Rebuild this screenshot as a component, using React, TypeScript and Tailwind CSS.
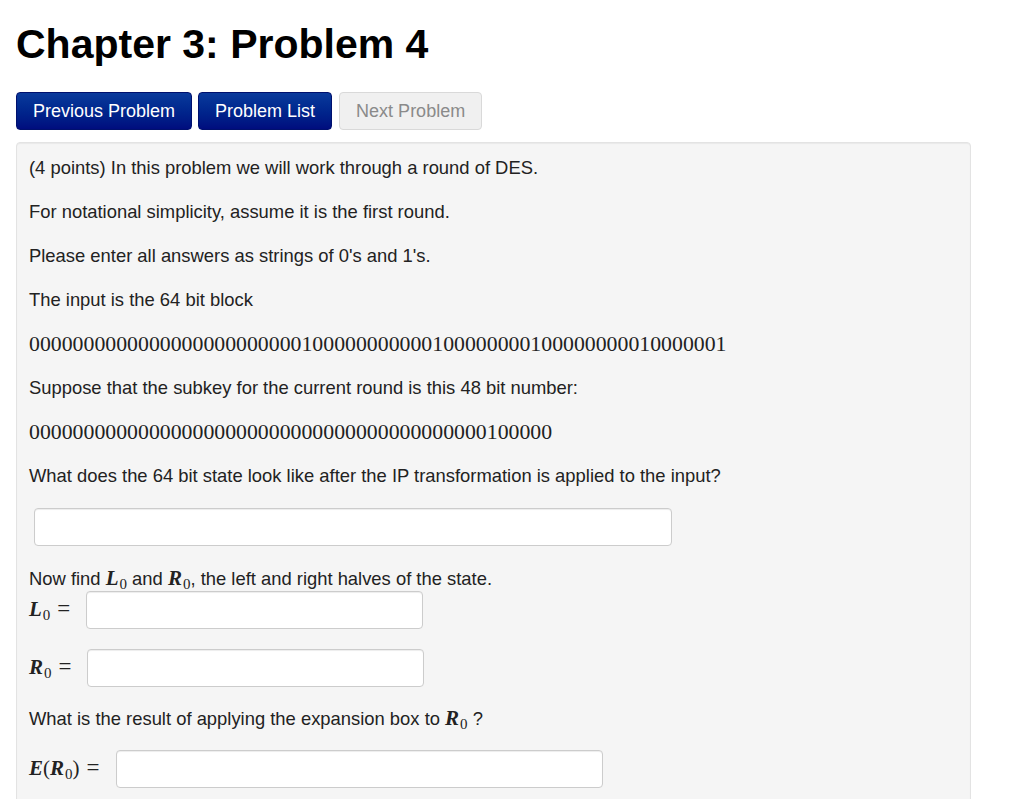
import type { ReactNode } from 'react'

const SANS = "font-['Liberation_Sans',Arial,sans-serif]"
const SERIF = "font-['Liberation_Serif','Times_New_Roman',serif]"

function Mi({ v, sub }: { v: string; sub?: string }) {
  return (
    <span className={`${SERIF} text-[21px] leading-none italic font-semibold`}>
      {v}
      {sub && (
        <span className="not-italic font-normal text-[15px] leading-none relative top-[4px] ml-px">{sub}</span>
      )}
    </span>
  )
}

function P({ children, className = '' }: { children: ReactNode; className?: string }) {
  return <p className={`leading-[22px] ${className}`}>{children}</p>
}

function AnswerBox({ className = '' }: { className?: string }) {
  return (
    <input
      type="text"
      className={`h-[38px] rounded-[4px] border border-[#cccccc] bg-white shadow-[inset_0_1px_1px_rgba(0,0,0,0.075)] ${className}`}
    />
  )
}

function Eq() {
  return <span className={`${SERIF} text-[23px] leading-none ml-[7px]`}>=</span>
}

export default function App() {
  return (
    <div className={`${SANS} min-h-[799px] bg-white pl-4 text-[#222]`}>
      <h1 className="pt-[23px] text-[41px] leading-[42px] font-bold text-black">
        Chapter 3: Problem 4
      </h1>

      {/* Navigation */}
      <div className="mt-[27px] flex gap-[6px] text-[18px]">
        <button className="h-[38px] rounded-[4px] border border-[#00106e] bg-linear-to-b from-[#0b3a9c] to-[#000c7e] px-4 text-white">
          Previous Problem
        </button>
        <button className="h-[38px] rounded-[4px] border border-[#00106e] bg-linear-to-b from-[#0b3a9c] to-[#000c7e] px-4 text-white">
          Problem List
        </button>
        <button className="ml-px h-[38px] rounded-[4px] border border-[#d9d9d9] bg-[#f0f0f0] px-4 text-[#8a8a8a]">
          Next Problem
        </button>
      </div>

      {/* Problem body */}
      <div className="mt-3 w-[955px] rounded-[4px] border border-[#e3e3e3] bg-[#f5f5f5] pt-[14px] pb-10 pl-3 text-[18.4px] shadow-[inset_0_1px_1px_rgba(0,0,0,0.05)]">
        <P className="mb-[22px]">(4 points) In this problem we will work through a round of DES.</P>
        <P className="mb-[22px]">For notational simplicity, assume it is the first round.</P>
        <P className="mb-[22px]">Please enter all answers as strings of 0's and 1's.</P>
        <P className="mb-[22px]">The input is the 64 bit block</P>
        <P className={`mb-[22px] ${SERIF} text-[21.8px]`}>
          0000000000000000000000000100000000000100000000100000000010000001
        </P>
        <P className="mb-[22px]">Suppose that the subkey for the current round is this 48 bit number:</P>
        <P className={`mb-[22px] ${SERIF} text-[21.8px]`}>
          000000000000000000000000000000000000000000100000
        </P>
        <P>What does the 64 bit state look like after the IP transformation is applied to the input?</P>
        <AnswerBox className="mt-[21px] ml-[5px] block w-[638px]" />

        <P className="mt-[22px] mb-px">
          Now find <Mi v="L" sub="0" /> and <Mi v="R" sub="0" />, the left and right halves of the state.
        </P>
        <div className="flex items-center">
          <span className="w-[57px] whitespace-nowrap">
            <Mi v="L" sub="0" />
            <Eq />
          </span>
          <AnswerBox className="w-[337px]" />
        </div>
        <div className="mt-5 flex items-center">
          <span className="w-[58px] whitespace-nowrap">
            <Mi v="R" sub="0" />
            <Eq />
          </span>
          <AnswerBox className="w-[337px]" />
        </div>

        <P className="mt-[21px] mb-5">
          What is the result of applying the expansion box to <Mi v="R" sub="0" /> ?
        </P>
        <div className="flex items-center">
          <span className="w-[87px] whitespace-nowrap">
            <Mi v="E" />
            <span className={`${SERIF} text-[21px] leading-none`}>(</span>
            <Mi v="R" sub="0" />
            <span className={`${SERIF} text-[21px] leading-none`}>)</span>
            <Eq />
          </span>
          <AnswerBox className="w-[487px]" />
        </div>
      </div>
    </div>
  )
}
